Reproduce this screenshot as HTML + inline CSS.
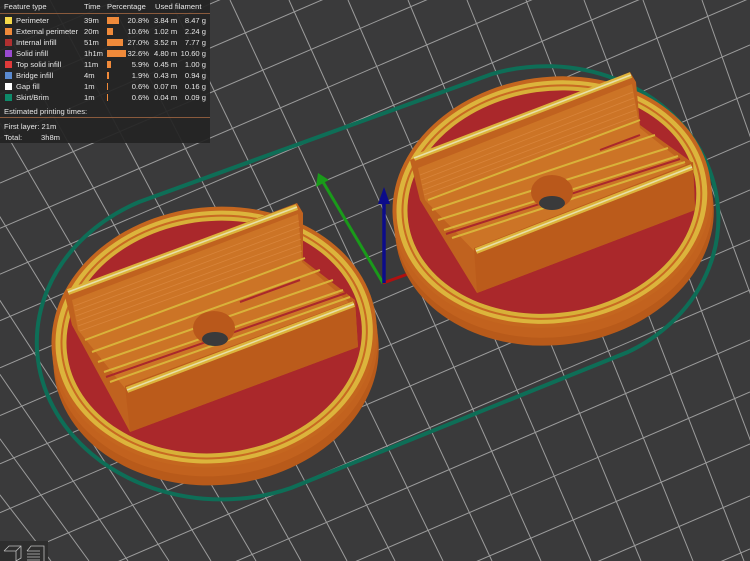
<!DOCTYPE html>
<html><head><meta charset="utf-8"><style>
html,body{margin:0;padding:0;background:#3a3a3b;width:750px;height:561px;overflow:hidden}
svg{position:absolute;left:0;top:0}
#leg{position:absolute;left:0;top:0;width:210px;height:143px;background:rgba(36,36,36,0.93);font-family:"Liberation Sans",sans-serif;font-size:7.6px;color:#e6e6e6;overflow:hidden}
#leg div{position:absolute;white-space:nowrap}
.sw{width:7px;height:7px}
.bar{height:7px;background:#f08a3a}
.r{text-align:right}
.sep{height:1px;background:#8a5a3c;left:0;width:210px}
</style></head><body>
<svg width="750" height="561" viewBox="0 0 750 561">
<defs>
<clipPath id="cl"><rect x="0" y="0" width="750" height="561"/></clipPath>
</defs>
<g clip-path="url(#cl)">
<g stroke="#9c9c9c" stroke-width="1" fill="none">
<line x1="0" y1="7.8" x2="750" y2="-314"/><line x1="0" y1="50.7" x2="750" y2="-272"/>
<line x1="0" y1="94.2" x2="750" y2="-228"/><line x1="0" y1="138.3" x2="750" y2="-184"/>
<line x1="0" y1="183" x2="750" y2="-139"/><line x1="0" y1="228.3" x2="750" y2="-94"/>
<line x1="0" y1="274.2" x2="750" y2="-48"/><line x1="0" y1="320.7" x2="750" y2="-1.8"/>
<line x1="0" y1="367.8" x2="750" y2="45"/><line x1="0" y1="415.5" x2="750" y2="93"/>
<line x1="0" y1="463.8" x2="750" y2="141"/><line x1="0" y1="512.7" x2="750" y2="190"/>
<line x1="0" y1="562.2" x2="750" y2="240"/><line x1="0" y1="612.3" x2="750" y2="290"/>
<line x1="0" y1="663" x2="750" y2="340"/><line x1="0" y1="714.3" x2="750" y2="392"/>
<line x1="0" y1="766.2" x2="750" y2="444"/><line x1="0" y1="818.7" x2="750" y2="496"/>
<line x1="0" y1="871.8" x2="750" y2="549"/>
<line x1="-383" y1="0" x2="51" y2="561"/><line x1="-320" y1="0" x2="89" y2="561"/>
<line x1="-257" y1="0" x2="128" y2="561"/><line x1="-195" y1="0" x2="169" y2="561"/>
<line x1="-133" y1="0" x2="211" y2="561"/><line x1="-72" y1="0" x2="256" y2="561"/>
<line x1="-11" y1="0" x2="301" y2="561"/><line x1="50" y1="0" x2="347" y2="561"/>
<line x1="110" y1="0" x2="395" y2="561"/><line x1="170" y1="0" x2="443" y2="561"/>
<line x1="230" y1="0" x2="492" y2="561"/><line x1="289" y1="0" x2="541" y2="561"/>
<line x1="348" y1="0" x2="591" y2="561"/><line x1="408" y1="0" x2="641" y2="561"/>
<line x1="467" y1="0" x2="693" y2="561"/><line x1="526" y1="0" x2="744" y2="561"/>
<line x1="584" y1="0" x2="796" y2="561"/><line x1="643" y1="0" x2="848" y2="561"/>
<line x1="702" y1="0" x2="900" y2="561"/><line x1="760" y1="0" x2="953" y2="561"/>
</g>
<path d="M139,202 L492,74 A172,152 0 0 1 628,352 L291,488 A185,157 0 0 1 139,202 Z" fill="none" stroke="#0e6e57" stroke-width="4"/>
<line x1="383" y1="283" x2="323" y2="182" stroke="#1a9a1a" stroke-width="3"/>
<polygon points="318,173 316,187 329,180" fill="#1a9a1a"/>
<line x1="383" y1="283" x2="408" y2="274" stroke="#b01010" stroke-width="3"/>
<line x1="384" y1="283" x2="384" y2="198" stroke="#0c0c8a" stroke-width="3.5"/>
<polygon points="384,187 378,204 390,204" fill="#0c0c8a"/>
<g transform="rotate(-8 553 210)">
<ellipse cx="553" cy="220" rx="160" ry="125" fill="#b85a1a"/>
<ellipse cx="553" cy="212" rx="160" ry="125" fill="#c2621e"/>
<ellipse cx="553" cy="202" rx="160" ry="125" fill="#c4661f"/>
<ellipse cx="553" cy="202" rx="156" ry="121" fill="#dcb43c"/>
<ellipse cx="553" cy="202" rx="151" ry="117" fill="#c86a22"/>
<ellipse cx="553" cy="202" rx="149" ry="115" fill="#d8b038"/>
<ellipse cx="553" cy="202" rx="145" ry="111" fill="#aa282b"/>
</g>
<polygon points="410,160 630,72 636,82 640,125 693,163 695,210 477,293 420,200" fill="#c0621f"/>
<polygon points="418,168 632,84 640,128 690,168 478,255 425,200" fill="#cc7426"/>
<g stroke="#d8843a" stroke-width="0.8">
<line x1="420" y1="175" x2="633" y2="92"/><line x1="421" y1="180" x2="634" y2="98"/><line x1="422" y1="185" x2="635" y2="104"/><line x1="423" y1="190" x2="636" y2="110"/><line x1="424" y1="195" x2="637" y2="116"/>
</g>
<g stroke="#d9b23a" stroke-width="2">
<line x1="428" y1="200" x2="640" y2="120"/><line x1="432" y1="210" x2="655" y2="135"/>
<line x1="438" y1="220" x2="668" y2="148"/><line x1="444" y1="230" x2="678" y2="156"/>
<line x1="452" y1="238" x2="685" y2="162"/>
</g>
<g stroke="#aa282b" stroke-width="2"><line x1="446" y1="234" x2="680" y2="159"/><line x1="600" y1="150" x2="640" y2="135"/></g>
<polygon points="474,248 693,162 695,210 477,293" fill="#bb5b1b"/>
<line x1="476" y1="251" x2="692" y2="167" stroke="#dcb43c" stroke-width="6"/>
<line x1="476" y1="251" x2="692" y2="167" stroke="#e8e0a8" stroke-width="1.5"/>
<line x1="414" y1="158" x2="631" y2="75" stroke="#dcb43c" stroke-width="6"/>
<line x1="414" y1="158" x2="631" y2="75" stroke="#e8e0a8" stroke-width="1.5"/>
<ellipse cx="552" cy="192" rx="21" ry="17" fill="#b9581b"/>
<ellipse cx="552" cy="203" rx="13" ry="7" fill="#3a3a3b"/>
<g transform="rotate(-6 215 345)">
<ellipse cx="215" cy="355" rx="163" ry="130" fill="#b85a1a"/>
<ellipse cx="215" cy="346" rx="163" ry="130" fill="#c2621e"/>
<ellipse cx="215" cy="337" rx="163" ry="130" fill="#c4661f"/>
<ellipse cx="215" cy="337" rx="159" ry="126" fill="#dcb43c"/>
<ellipse cx="215" cy="337" rx="154" ry="122" fill="#c86a22"/>
<ellipse cx="215" cy="337" rx="152" ry="120" fill="#d8b038"/>
<ellipse cx="215" cy="337" rx="148" ry="116" fill="#aa282b"/>
</g>
<polygon points="64,292 297,203 303,213 303,260 355,300 358,347 130,432 72,325" fill="#c0621f"/>
<polygon points="72,300 298,214 302,262 352,305 128,392 78,330" fill="#cc7426"/>
<g stroke="#d8843a" stroke-width="0.8">
<line x1="74" y1="306" x2="299" y2="221"/><line x1="75" y1="311" x2="300" y2="227"/><line x1="76" y1="316" x2="300" y2="233"/><line x1="77" y1="321" x2="301" y2="239"/><line x1="78" y1="326" x2="301" y2="245"/><line x1="80" y1="331" x2="302" y2="251"/>
</g>
<g stroke="#d9b23a" stroke-width="2">
<line x1="85" y1="340" x2="305" y2="258"/><line x1="92" y1="352" x2="320" y2="270"/>
<line x1="98" y1="362" x2="333" y2="280"/><line x1="104" y1="372" x2="343" y2="290"/>
<line x1="110" y1="382" x2="350" y2="297"/>
</g>
<g stroke="#aa282b" stroke-width="2"><line x1="106" y1="377" x2="346" y2="293"/><line x1="240" y1="302" x2="300" y2="280"/></g>
<polygon points="125,386 355,300 358,347 130,432" fill="#bb5b1b"/>
<line x1="127" y1="390" x2="354" y2="304" stroke="#dcb43c" stroke-width="6"/>
<line x1="127" y1="390" x2="354" y2="304" stroke="#e8e0a8" stroke-width="1.5"/>
<line x1="68" y1="292" x2="297" y2="207" stroke="#dcb43c" stroke-width="6"/>
<line x1="68" y1="292" x2="297" y2="207" stroke="#e8e0a8" stroke-width="1.5"/>
<ellipse cx="214" cy="328" rx="21" ry="17" fill="#b9581b"/>
<ellipse cx="215" cy="339" rx="13" ry="7" fill="#3a3a3b"/>
<rect x="0" y="541" width="48" height="20" fill="#2e2e2e"/>
<g stroke="#bdbdbd" stroke-width="0.8" fill="none">
<path d="M4,551 L9,546 L21,546 L21,558 L16,561 M4,551 L16,551 L16,561 M16,551 L21,546"/>
<path d="M27,551 L31,546 L44,546 L44,561 M27,551 L40,551 M27,554 L40,554 M27,557 L40,557 M27,560 L40,560"/>
</g>
</g>
</svg>
<div id="leg">
<div style="left:4px;top:2px">Feature type</div><div style="left:84px;top:2px">Time</div><div style="left:107px;top:2px">Percentage</div><div style="left:155px;top:2px">Used filament</div>
<div class="sep" style="top:13px"></div>

<div class="sw" style="left:5px;top:17px;background:#f5d94a"></div><div style="left:16px;top:16px">Perimeter</div><div style="left:84px;top:16px">39m</div><div class="bar" style="left:107px;top:17px;width:12px"></div><div class="r" style="left:120px;top:16px;width:29px">20.8%</div><div style="left:154px;top:16px">3.84 m</div><div class="r" style="left:176px;top:16px;width:30px">8.47 g</div>

<div class="sw" style="left:5px;top:28px;background:#f08a3a"></div><div style="left:16px;top:27px">External perimeter</div><div style="left:84px;top:27px">20m</div><div class="bar" style="left:107px;top:28px;width:6px"></div><div class="r" style="left:120px;top:27px;width:29px">10.6%</div><div style="left:154px;top:27px">1.02 m</div><div class="r" style="left:176px;top:27px;width:30px">2.24 g</div>

<div class="sw" style="left:5px;top:39px;background:#b03030"></div><div style="left:16px;top:38px">Internal infill</div><div style="left:84px;top:38px">51m</div><div class="bar" style="left:107px;top:39px;width:16px"></div><div class="r" style="left:120px;top:38px;width:29px">27.0%</div><div style="left:154px;top:38px">3.52 m</div><div class="r" style="left:176px;top:38px;width:30px">7.77 g</div>

<div class="sw" style="left:5px;top:50px;background:#9a4ad0"></div><div style="left:16px;top:49px">Solid infill</div><div style="left:84px;top:49px">1h1m</div><div class="bar" style="left:107px;top:50px;width:19px"></div><div class="r" style="left:120px;top:49px;width:29px">32.6%</div><div style="left:154px;top:49px">4.80 m</div><div class="r" style="left:176px;top:49px;width:30px">10.60 g</div>

<div class="sw" style="left:5px;top:61px;background:#e03a3a"></div><div style="left:16px;top:60px">Top solid infill</div><div style="left:84px;top:60px">11m</div><div class="bar" style="left:107px;top:61px;width:4px"></div><div class="r" style="left:120px;top:60px;width:29px">5.9%</div><div style="left:154px;top:60px">0.45 m</div><div class="r" style="left:176px;top:60px;width:30px">1.00 g</div>

<div class="sw" style="left:5px;top:72px;background:#5a8ad0"></div><div style="left:16px;top:71px">Bridge infill</div><div style="left:84px;top:71px">4m</div><div class="bar" style="left:107px;top:72px;width:1.5px"></div><div class="r" style="left:120px;top:71px;width:29px">1.9%</div><div style="left:154px;top:71px">0.43 m</div><div class="r" style="left:176px;top:71px;width:30px">0.94 g</div>

<div class="sw" style="left:5px;top:83px;background:#ffffff"></div><div style="left:16px;top:82px">Gap fill</div><div style="left:84px;top:82px">1m</div><div class="bar" style="left:107px;top:83px;width:1px"></div><div class="r" style="left:120px;top:82px;width:29px">0.6%</div><div style="left:154px;top:82px">0.07 m</div><div class="r" style="left:176px;top:82px;width:30px">0.16 g</div>

<div class="sw" style="left:5px;top:94px;background:#0e8a6a"></div><div style="left:16px;top:93px">Skirt/Brim</div><div style="left:84px;top:93px">1m</div><div class="bar" style="left:107px;top:94px;width:1px"></div><div class="r" style="left:120px;top:93px;width:29px">0.6%</div><div style="left:154px;top:93px">0.04 m</div><div class="r" style="left:176px;top:93px;width:30px">0.09 g</div>

<div style="left:4px;top:107px">Estimated printing times:</div>
<div class="sep" style="top:117px"></div>
<div style="left:4px;top:122px">First layer: 21m</div>
<div style="left:4px;top:133px">Total:</div><div style="left:41px;top:133px">3h8m</div>
</div>
</body></html>
